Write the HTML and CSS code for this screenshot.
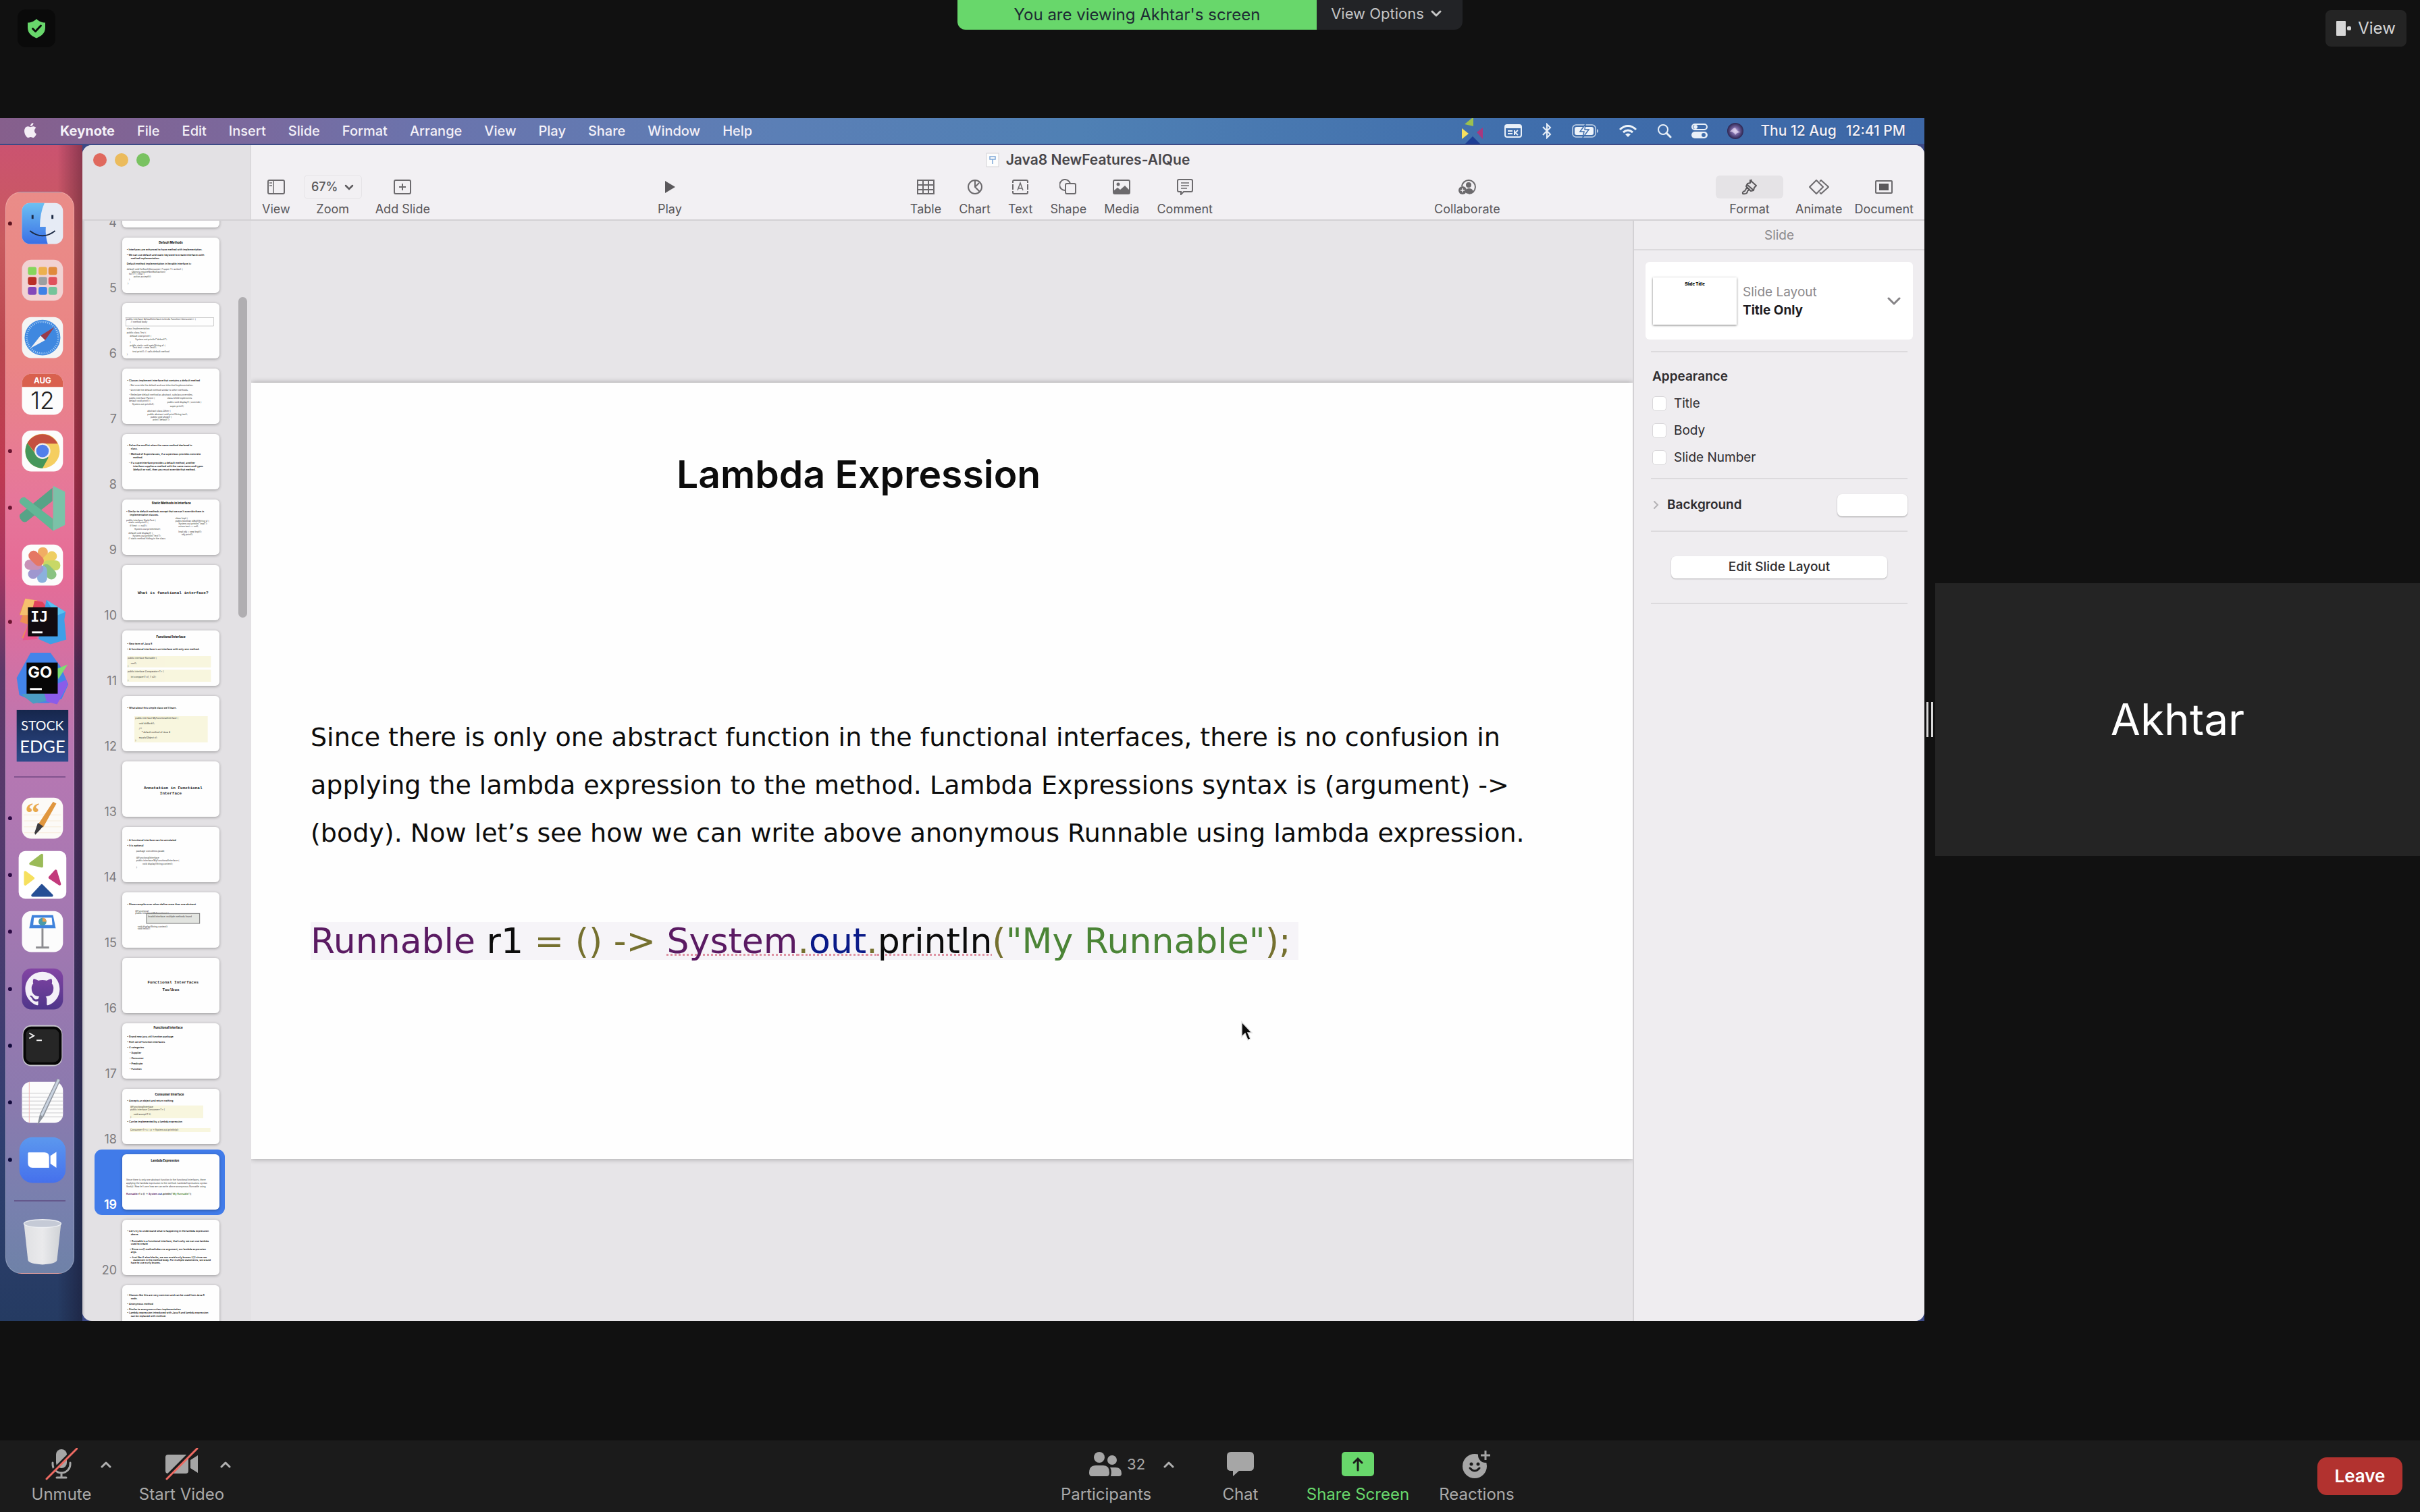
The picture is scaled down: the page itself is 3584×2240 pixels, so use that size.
FILE: index.html
```html
<!DOCTYPE html>
<html lang="en">
<head>
<meta charset="utf-8">
<title>Zoom Meeting</title>
<link rel="stylesheet" href="styles.css">
</head>
<body>
<main class="stage">
  <header class="top">
    <button class="shield" aria-label="Meeting information">
      <svg width="28" height="30" viewBox="0 0 28 30"><path d="M14 1c4 4 8 5.500 13 5.500V14c0 8-6 12.500-13 15.500C7 26.500 1 22 1 14V6.500C6 6.500 10 5 14 1z" fill="#68d76b"/><path d="M8.500 15.500l4 4 8-8.500" fill="none" stroke="#0a0a0a" stroke-width="3" stroke-linecap="round" stroke-linejoin="round"/></svg>
    </button>
    <div class="banner">
      <span class="banner-msg">You are viewing Akhtar's screen</span>
      <button class="banner-opt">View Options
        <svg width="16" height="10" viewBox="0 0 16 10"><path d="M2 2l6 6 6-6" fill="none" stroke="#c4c4c4" stroke-width="3" stroke-linecap="round" stroke-linejoin="round"/></svg>
      </button>
    </div>
    <button class="view-btn">
      <svg width="22" height="22" viewBox="0 0 22 22" fill="#d6d6d6"><rect width="14" height="22" rx="1"/><rect x="16" y="8" width="6" height="6" rx="2"/></svg>
      View
    </button>
  </header>

  <section class="share">
    <nav class="menubar">
      <svg class="apple" width="22" height="24" viewBox="0 0 24 24"><path fill="#f4eef6" d="M12.152 6.896c-.948 0-2.415-1.078-3.960-1.040-2.040.027-3.910 1.183-4.961 3.014-2.117 3.675-.546 9.103 1.519 12.090 1.013 1.454 2.208 3.090 3.792 3.039 1.520-.065 2.090-.987 3.935-.987 1.831 0 2.350.987 3.960.948 1.637-.026 2.676-1.480 3.676-2.948 1.156-1.688 1.636-3.325 1.662-3.415-.039-.013-3.182-1.221-3.220-4.857-.026-3.040 2.480-4.494 2.597-4.559-1.429-2.090-3.623-2.324-4.390-2.376-2-.156-3.675 1.090-4.610 1.090zM15.530 3.830c.843-1.012 1.400-2.427 1.245-3.830-1.207.052-2.662.805-3.532 1.818-.780.896-1.454 2.338-1.273 3.714 1.338.104 2.715-.688 3.559-1.701"/></svg>
      <button class="menu app">Keynote</button>
      <button class="menu">File</button>
      <button class="menu">Edit</button>
      <button class="menu">Insert</button>
      <button class="menu">Slide</button>
      <button class="menu">Format</button>
      <button class="menu">Arrange</button>
      <button class="menu">View</button>
      <button class="menu">Play</button>
      <button class="menu">Share</button>
      <button class="menu">Window</button>
      <button class="menu">Help</button>
      <div class="status">
        <svg width="36" height="38" viewBox="0 0 36 38"><path d="M17 0h2v12L6 9z" fill="#9cc04f"/><path d="M2 15l10 8-10 8z" fill="#f6e05e"/><path d="M33 14v17l-9-10z" fill="#a8387e"/><path d="M18 27l11 11H7z" fill="#1e3f95"/></svg>
        <svg width="26" height="20" viewBox="0 0 26 20"><rect x="1" y="1" width="24" height="18" rx="3" fill="none" stroke="#e9f0f8" stroke-width="2"/><path d="M1 2h24v4H1z" fill="#e9f0f8"/><path d="M5 10h7M5 14h7M15 9v7M20 9l-4 3.500 4 3.500" stroke="#e9f0f8" stroke-width="2" fill="none"/></svg>
        <svg width="16" height="24" viewBox="0 0 16 24"><path d="M2 6l11 11-5 5V2l5 5L2 18" fill="none" stroke="#e9f0f8" stroke-width="2"/></svg>
        <svg width="40" height="20" viewBox="0 0 40 20"><rect x="1" y="1" width="34" height="18" rx="5" fill="none" stroke="#c9d8ea" stroke-width="1.500"/><rect x="4" y="4" width="28" height="12" rx="3" fill="#eef4fa"/><path d="M20 0l-8 11h6l-2 9 9-12h-6z" fill="#eef4fa" stroke="#3f6dab" stroke-width="1.500"/><path d="M37 7v6q2-1 2-3t-2-3z" fill="#c9d8ea"/></svg>
        <svg width="28" height="20" viewBox="0 0 28 20" fill="none" stroke="#eef4fa" stroke-width="3"><path d="M2 8q12-11 24 0M7 12q7-6 14 0"/><path d="M14 19l-4-4q4-3 8 0z" fill="#eef4fa" stroke="none"/></svg>
        <svg width="22" height="22" viewBox="0 0 22 22"><circle cx="9" cy="9" r="7" fill="none" stroke="#e9f0f8" stroke-width="2"/><path d="M14 14l6 6" stroke="#e9f0f8" stroke-width="3" stroke-linecap="round"/></svg>
        <svg width="24" height="22" viewBox="0 0 24 22"><rect x="1" y="1" width="22" height="8" rx="4" fill="none" stroke="#e9f0f8" stroke-width="2"/><circle cx="6" cy="5" r="3" fill="#e9f0f8"/><rect y="12" width="24" height="10" rx="5" fill="#e9f0f8"/><circle cx="18" cy="17" r="3" fill="#3f6dab"/></svg>
        <svg width="24" height="24" viewBox="0 0 24 24"><defs><radialGradient id="siri"><stop offset="0" stop-color="#d9d4f0"/><stop offset=".4" stop-color="#7d6ba8"/><stop offset="1" stop-color="#2b2450"/></radialGradient></defs><circle cx="12" cy="12" r="12" fill="url(#siri)"/><path d="M4 13q5-6 8-6 1 5 8 7-6 0-8 4-2-5-8-5z" fill="#e6d9f4" opacity=".7"/></svg>
      </div>
      <span class="clock"><span>Thu 12 Aug</span><span>12:41 PM</span></span>
    </nav>

    <div class="desktop">
      <aside class="dock-col">
        <div class="dock">
          <svg viewBox="0 0 102 84"><defs><linearGradient id="fb" x2="0" y2="1"><stop offset="0" stop-color="#6cc0f2"/><stop offset="1" stop-color="#3a6fe6"/></linearGradient></defs><circle cx="6" cy="42" r="3" fill="#5e1420"/><g transform="translate(15 2)"><rect x="9" y="9" width="62" height="62" rx="12" fill="#e6ebf5"/><path d="M21 9h22q-7 16-7 36h9q-1 14 3 26H21a12 12 0 0 1-12-12V21A12 12 0 0 1 21 9z" fill="url(#fb)"/><path d="M25 27v6M55 27v6" stroke="#1c2a44" stroke-width="3"/><path d="M21 51q19 15 38 0" fill="none" stroke="#1c2a44" stroke-width="2"/></g></svg>
          <svg viewBox="0 0 102 84"><g transform="translate(15 2)"><rect x="9" y="9" width="62" height="62" rx="14" fill="#f1d2d2"/><rect x="18" y="20" width="13" height="12" rx="3" fill="#86d65c"/><rect x="34" y="20" width="13" height="12" rx="3" fill="#edb04e"/><rect x="49" y="20" width="13" height="12" rx="3" fill="#e08a3c"/><rect x="18" y="35" width="13" height="12" rx="3" fill="#b92f26"/><rect x="34" y="35" width="13" height="12" rx="3" fill="#9c9fa1"/><rect x="49" y="35" width="13" height="12" rx="3" fill="#e0525c"/><rect x="18" y="50" width="13" height="12" rx="3" fill="#8348ba"/><rect x="34" y="50" width="13" height="12" rx="3" fill="#3f82e6"/><rect x="49" y="50" width="13" height="12" rx="3" fill="#74c49a"/></g></svg>
          <svg viewBox="0 0 102 84"><g transform="translate(15 2)"><rect x="9" y="9" width="62" height="62" rx="14" fill="#f4f4f4"/><circle cx="40" cy="40" r="27" fill="#3f88e0"/><circle cx="40" cy="40" r="24" fill="none" stroke="#b8d8f6" stroke-width="3" stroke-dasharray="1 2"/><path d="M58 24L44 44l-7-7z" fill="#9a3a48"/><path d="M22 56l15-19 7 7z" fill="#f0f0f2"/></g></svg>
          <svg viewBox="0 0 102 84"><g transform="translate(15 2)"><rect x="9" y="9" width="62" height="62" rx="14" fill="#fcfcfc"/><path d="M9 29v-6A14 14 0 0 1 23 9h34a14 14 0 0 1 14 14v6z" fill="#d9604e"/><text x="40" y="24" class="cal-m">AUG</text><text x="40" y="62" class="cal-d">12</text></g></svg>
          <svg viewBox="0 0 102 84"><circle cx="6" cy="42" r="3" fill="#6a1430"/><g transform="translate(15 2)"><rect x="9" y="9" width="62" height="62" rx="14" fill="#fcfcfc"/><circle cx="40" cy="40" r="26" fill="#f5ce60"/><path d="M17 28A26 26 0 0 1 63 29H40l-9 16z" fill="#c4503f"/><path d="M17 28A26 26 0 0 0 40 66l9-16-9-10-10 5z" fill="#46965a"/><circle cx="40" cy="40" r="12" fill="#f2efe9"/><circle cx="40" cy="40" r="9.500" fill="#527fea"/></g></svg>
          <svg viewBox="0 0 102 84"><circle cx="6" cy="42" r="3" fill="#6a1430"/><g transform="translate(15 2)"><path d="M6 50l49-40v20L16 61q-5 2-8-2-4-4-2-9z" fill="#57a387"/><path d="M6 28q2-4 7-4l43 33v18L7 34q-3-3-1-6z" fill="#62b796"/><path d="M56 7l18 9v50l-18 9z" fill="#7ac2a8"/></g></svg>
          <svg viewBox="0 0 102 84"><g transform="translate(15 2)"><rect x="9" y="9" width="62" height="62" rx="14" fill="#fcfcfc"/><g opacity=".85"><rect x="33" y="13" width="15" height="26" rx="7" fill="#f0a04a"/><rect x="33" y="13" width="15" height="26" rx="7" fill="#ecc646" transform="rotate(45 40 40)"/><rect x="33" y="13" width="15" height="26" rx="7" fill="#c0d24c" transform="rotate(90 40 40)"/><rect x="33" y="13" width="15" height="26" rx="7" fill="#76b86c" transform="rotate(135 40 40)"/><rect x="33" y="13" width="15" height="26" rx="7" fill="#78a4d8" transform="rotate(180 40 40)"/><rect x="33" y="13" width="15" height="26" rx="7" fill="#8f86c8" transform="rotate(225 40 40)"/><rect x="33" y="13" width="15" height="26" rx="7" fill="#c080ac" transform="rotate(270 40 40)"/><rect x="33" y="13" width="15" height="26" rx="7" fill="#e2604a" transform="rotate(315 40 40)"/></g></g></svg>
          <svg viewBox="0 0 102 84"><circle cx="6" cy="42" r="3" fill="#6a1430"/><g transform="translate(15 2)"><path d="M14 5l18 3 10 14-24 46-9-4 9-20-12-4 4-10-5-1z" fill="#ee8f52"/><path d="M14 5l18 3-14 22-12 0z" fill="#f5c06e"/><path d="M28 8l12 2 8 10-24 4z" fill="#e0425c"/><path d="M46 7l29 18-2 12 3 30-24 7-18-8z" fill="#3f9fe6"/><path d="M46 7l29 18-14 6z" fill="#5ac2f0"/><path d="M10 68l9-26 14 24z" fill="#e8568c"/><rect x="18" y="18" width="45" height="44" fill="#120c10"/><text x="22" y="40" class="jb ij">IJ</text><path d="M24 56h16" stroke="#fff" stroke-width="3"/></g></svg>
          <svg viewBox="0 0 102 84"><g transform="translate(15 2)"><path d="M22 1h30l16 22 11 26-10 22-20 6-16 0-28-12-4-26z" fill="#4384ea"/><path d="M44 56l32-14 2 8-16 29-22-6z" fill="#8a5cea"/><path d="M8 64l34-4 4 14-20 4z" fill="#4c9cc2"/><path d="M60 26l18-7-14 22z" fill="#7ee070"/><rect x="16" y="16" width="47" height="47" fill="#060606"/><text x="18" y="39" class="jb">GO</text><path d="M21 56h18" stroke="#fff" stroke-width="3"/></g></svg>
          <svg viewBox="0 0 102 84"><defs><linearGradient id="se" x2="0" y2="1"><stop offset="0" stop-color="#16264c"/><stop offset="1" stop-color="#2d4a8a"/></linearGradient></defs><g transform="translate(15 2)"><rect x="1" y="1" width="78" height="78" fill="url(#se)"/><text x="40" y="32" class="se1">STOCK</text><text x="40" y="65" class="se2">EDGE</text></g></svg>
          <hr>
          <svg viewBox="0 0 102 84"><circle cx="6" cy="42" r="3" fill="#2c0a44"/><g transform="translate(15 2)"><rect x="9" y="9" width="62" height="62" rx="14" fill="#fcfaf7"/><path d="M12 35h56M12 44h56M12 53h56M12 62h56" stroke="#f6ead8"/><text x="14" y="46" class="quote">“</text><path d="M56 15l5 3-20 36-8-4z" fill="#e0963e"/><path d="M33 47l8 5-6 7-6 6-1-3z" fill="#3c3c40"/></g></svg>
          <svg viewBox="0 0 102 84"><circle cx="6" cy="42" r="3" fill="#2c0a44"/><g transform="translate(15 2)"><rect x="4" y="4" width="72" height="72" rx="10" fill="#fff"/><g stroke-linejoin="round" stroke-width="4"><path d="M39 10v17l-17-4z" fill="#9bbb58" stroke="#9bbb58"/><path d="M14 36l12 9-12 9z" fill="#f6e05e" stroke="#f6e05e"/><path d="M60 34l6 20-15-10z" fill="#c33a7c" stroke="#c33a7c"/><path d="M39 56l15 15H25z" fill="#264f95" stroke="#264f95"/></g></g></svg>
          <svg viewBox="0 0 102 84"><circle cx="6" cy="42" r="3" fill="#2c0a44"/><g transform="translate(15 2)"><rect x="9" y="9" width="62" height="62" rx="14" fill="#fcfcfc"/><path d="M24 15h32l4 20H20z" fill="#3e82dc"/><path d="M27 19h27l1 11H26z" fill="#fff"/><circle cx="40" cy="25" r="6" fill="#4a9aa8"/><path d="M40 25v-6a6 6 0 0 1 6 6z" fill="#e8a050"/><path d="M40 35v28M30 64h20" stroke="#8c8c90" stroke-width="3"/></g></svg>
          <svg viewBox="0 0 102 84"><defs><linearGradient id="gh" x2="0" y2="1"><stop offset="0" stop-color="#8344a4"/><stop offset="1" stop-color="#4f368a"/></linearGradient></defs><circle cx="6" cy="42" r="3" fill="#200a44"/><g transform="translate(15 2)"><rect x="9" y="9" width="62" height="62" rx="14" fill="url(#gh)"/><path transform="translate(14 14) scale(3.250)" fill="#f4f0f8" d="M8 0C3.580 0 0 3.580 0 8c0 3.540 2.290 6.530 5.470 7.590.400.070.550-.170.550-.380 0-.190-.010-.820-.010-1.490-2.010.370-2.530-.490-2.690-.940-.090-.230-.480-.940-.820-1.130-.280-.150-.680-.520-.010-.530.630-.010 1.080.580 1.230.820.720 1.210 1.870.870 2.330.660.070-.520.280-.870.510-1.070-1.780-.200-3.640-.890-3.640-3.950 0-.870.310-1.590.820-2.150-.080-.200-.360-1.020.080-2.120 0 0 .670-.210 2.200.820.640-.180 1.320-.270 2-.270.680 0 1.360.090 2 .270 1.530-1.040 2.200-.820 2.200-.820.440 1.100.160 1.920.080 2.120.510.560.820 1.270.820 2.150 0 3.070-1.870 3.750-3.650 3.950.290.250.540.730.540 1.480 0 1.070-.010 1.930-.010 2.200 0 .210.150.460.550.380A8.013 8.013 0 0016 8c0-4.420-3.580-8-8-8z"/></g></svg>
          <svg viewBox="0 0 102 84"><circle cx="6" cy="42" r="3" fill="#120a3c"/><g transform="translate(15 2)"><rect x="10" y="9" width="60" height="62" rx="13" fill="#c6c4cc"/><rect x="11" y="11" width="58" height="58" rx="12" fill="#060606"/><rect x="15" y="15" width="50" height="50" rx="8" fill="#262626"/><path d="M20 21l7 4-7 4M31 32h8" fill="none" stroke="#eee" stroke-width="2"/></g></svg>
          <svg viewBox="0 0 102 84"><circle cx="6" cy="42" r="3" fill="#120a3c"/><g transform="translate(15 2)"><rect x="9" y="9" width="62" height="62" rx="13" fill="#fcfcfc"/><path d="M9 26h62M9 32h62M9 38h62M9 44h62M9 50h62M9 56h62M9 62h62" stroke="#c9c9cc"/><path d="M20 9v62" stroke="#f0b8b8"/><path d="M62 4l5 3-25 54-10 14 4-17z" fill="#8f959e"/><path d="M63 5l3 1-26 55-3-2z" fill="#c9d3e0"/></g></svg>
          <svg viewBox="0 0 102 84"><defs><linearGradient id="zm" x2="0" y2="1"><stop offset="0" stop-color="#5c98ee"/><stop offset="1" stop-color="#4570ec"/></linearGradient></defs><circle cx="6" cy="42" r="3" fill="#0a0a3c"/><g transform="translate(15 2)"><rect x="5" y="6" width="70" height="69" rx="20" fill="url(#zm)"/><path d="M19 29h24q7 0 7 7v16H25q-7 0-7-7V30z" fill="#fff"/><path d="M61 28v24l-9-6V34z" fill="#fff"/></g></svg>
          <hr>
          <svg viewBox="0 0 102 84"><defs><linearGradient id="tr"><stop offset="0" stop-color="#dfe0e3"/><stop offset=".5" stop-color="#eaeaec"/><stop offset="1" stop-color="#cfd2d6"/></linearGradient></defs><g transform="translate(15 2)"><path d="M12 12l6 55q1 6 22 7 21-1 22-7l6-55z" fill="url(#tr)"/><ellipse cx="40" cy="12" rx="28" ry="6" fill="#c5cad6" stroke="#eceef2" stroke-width="1.500"/></g></svg>
        </div>
      </aside>

      <section class="window">
        <header class="win-head">
          <div class="lights"><i class="red"></i><i class="yellow"></i><i class="green"></i></div>
          <div class="bar">
            <h1 class="doc-title">
              <svg width="20" height="22" viewBox="0 0 20 22"><rect x="1" y="1" width="18" height="20" fill="#fdfdfd" stroke="#d4d2d6"/><path d="M6 6h8v4H6zM10 10v7" fill="none" stroke="#7fa8d8" stroke-width="1.500"/></svg>
              Java8 NewFeatures-AIQue</h1>
            <div class="tools">
              <div class="group left">
                <button class="tool"><svg width="26" height="22" viewBox="0 0 26 22"><rect x="1" y="1" width="24" height="20" rx="2" fill="none" stroke="#6c6a6d" stroke-width="2"/><path d="M9 1v20M3 5h4M3 9h4" stroke="#6c6a6d" stroke-width="1.500"/></svg>View</button>
                <button class="tool"><span class="pct">67% <svg width="14" height="9" viewBox="0 0 14 9"><path d="M2 2l5 5 5-5" fill="none" stroke="#5c5a5d" stroke-width="2.500" stroke-linecap="round"/></svg></span>Zoom</button>
                <button class="tool"><svg width="26" height="22" viewBox="0 0 26 22"><rect x="1" y="1" width="24" height="20" rx="2" fill="none" stroke="#6c6a6d" stroke-width="2"/><path d="M13 6v10M8 11h10" stroke="#6c6a6d" stroke-width="2"/></svg>Add Slide</button>
              </div>
              <div class="group play">
                <button class="tool"><svg width="18" height="20" viewBox="0 0 18 20"><path d="M2 1l15 9-15 9z" fill="#5a585b"/></svg>Play</button>
              </div>
              <div class="group media">
                <button class="tool"><svg width="26" height="22" viewBox="0 0 26 22"><path d="M1 1h24v20H1zM1 8h24M1 15h24M9 1v20M17 1v20" fill="none" stroke="#6c6a6d" stroke-width="2"/></svg>Table</button>
                <button class="tool"><svg width="22" height="22" viewBox="0 0 22 22"><circle cx="11" cy="11" r="10" fill="none" stroke="#6c6a6d" stroke-width="2"/><path d="M11 1v10l7 7M11 11l6-6" fill="none" stroke="#6c6a6d" stroke-width="2"/></svg>Chart</button>
                <button class="tool"><svg width="26" height="22" viewBox="0 0 26 22"><rect x="2" y="1" width="22" height="20" rx="2" fill="none" stroke="#6c6a6d" stroke-width="2"/><path d="M9 16l4-11 4 11M10 13h6" fill="none" stroke="#6c6a6d" stroke-width="1.500"/><path d="M0 5h4v2H0zM22 5h4v2h-4zM0 15h4v2H0zM22 15h4v2h-4z" fill="#f2f0f3"/></svg>Text</button>
                <button class="tool"><svg width="26" height="24" viewBox="0 0 26 24" fill="none" stroke="#6c6a6d" stroke-width="2"><path d="M8 17A8 8 0 1 1 16 7"/><rect x="9" y="7" width="15" height="15" rx="2"/></svg>Shape</button>
                <button class="tool"><svg width="26" height="22" viewBox="0 0 26 22"><rect x="1" y="1" width="24" height="20" rx="2" fill="none" stroke="#6c6a6d" stroke-width="2"/><circle cx="8" cy="7" r="2.500" fill="#6c6a6d"/><path d="M2 20v-4l5-4 4 3 7-6 6 6v5z" fill="#6c6a6d"/></svg>Media</button>
                <button class="tool"><svg width="24" height="24" viewBox="0 0 24 24" fill="none" stroke="#6c6a6d" stroke-width="2"><path d="M3 1h18q2 0 2 2v14q0 2-2 2H10l-4 4v-4H3q-2 0-2-2V3q0-2 2-2z"/><path d="M6 6h12M6 10h12M6 14h9" stroke-width="1.500"/></svg>Comment</button>
              </div>
              <div class="group collab">
                <button class="tool"><svg width="26" height="24" viewBox="0 0 26 24"><path d="M5 11a10 10 0 1 1 10 11" fill="none" stroke="#6c6a6d" stroke-width="2"/><circle cx="15" cy="9" r="4" fill="#6c6a6d"/><path d="M11 21q-2-6 4-7 6 0 7 5-3 3-8 3z" fill="#6c6a6d"/><circle cx="6" cy="17" r="6" fill="#6c6a6d"/><path d="M6 14v6M3 17h6" stroke="#f2f0f3" stroke-width="1.500"/></svg>Collaborate</button>
              </div>
              <div class="group right">
                <button class="tool fmt"><span class="hl"><svg width="24" height="24" viewBox="0 0 24 24" fill="none" stroke="#5a585b" stroke-width="2" stroke-linejoin="round"><path d="M13 2l9 8-3 3-1 4-4 1-7-7 2-4 4-1zM15 1l-1 4M9 9l8 7"/><path d="M8 13l4 3-3 2q0 5-7 4-1-3 3-4z"/></svg></span>Format</button>
                <button class="tool"><svg width="30" height="24" viewBox="0 0 30 24" fill="none" stroke="#6c6a6d" stroke-width="2" stroke-linejoin="round"><path d="M11 2l10 10-10 10L1 12z"/><path d="M16 4l2-2 11 10-11 10-2-2"/></svg>Animate</button>
                <button class="tool"><svg width="26" height="20" viewBox="0 0 26 20"><rect x="1" y="1" width="24" height="18" rx="1" fill="none" stroke="#6c6a6d" stroke-width="2"/><rect x="6" y="5" width="14" height="10" fill="#5a585b"/></svg>Document</button>
              </div>
            </div>
          </div>
        </header>

        <div class="win-body">
          <nav class="nav">
            <ol class="slides" start="4">
              <li><span>4</span><svg viewBox="0 0 432 246"></svg></li>
              <li><span>5</span><svg viewBox="0 0 432 246"><text x="216" y="28" class="h">Default Methods</text><g class="b"><text x="20" y="58">•  Interfaces are enhanced to have method with implementation.</text><text x="20" y="81">•  We can use default and static keyword to create interfaces with</text><text x="38" y="97">method implementation.</text><text x="20" y="121">Default method implementation in Iterable interface is:</text></g><g class="c"><text x="20" y="144">default void forEach(Consumer&lt;? super T&gt; action) {</text><text x="42" y="156">Objects.requireNonNull(action);</text><text x="30" y="166">for (T t : this) {</text><text x="50" y="178">action.accept(t);</text><text x="30" y="190">}</text><text x="24" y="206">}</text></g></svg></li>
              <li><span>6</span><svg viewBox="0 0 432 246"><rect x="16" y="64" width="390" height="38" fill="none" stroke="#777"/><g class="c"><text x="18" y="76">public interface DefaultInterface extends Function&lt;Consumer&gt; {</text><text x="38" y="88">// method body</text><text x="20" y="116">class Implementation</text><text x="20" y="134">public class Test {</text><text x="34" y="150">default void print() {</text><text x="58" y="166">System.out.println("default");</text><text x="34" y="178">}</text><text x="34" y="192">public static void main(String a) {</text><text x="46" y="202">Test test = new Test();</text><text x="46" y="218">test.print(); // calls default method</text><text x="20" y="232">}</text></g></svg></li>
              <li><span>7</span><svg viewBox="0 0 432 246"><g class="b"><text x="22" y="56">•  Classes implement interface that contains a default method</text></g><g class="c"><text x="30" y="78">–  Not override the default and use inherited implementation.</text><text x="30" y="98">–  Override the default method similar to other methods.</text><text x="30" y="119">–  Redeclare default method as abstract, subclass overrides.</text><text x="30" y="136">public interface Parent {</text><text x="30" y="148">default void print() {</text><text x="44" y="162">System.out.println();</text><text x="200" y="136">class Child implements</text><text x="200" y="152">public void display() { override }</text><text x="212" y="170">super.print();</text><text x="112" y="192">abstract class Other {</text><text x="112" y="206">public abstract void print(String text);</text><text x="126" y="220">public void show() {</text><text x="136" y="230">print("default");</text></g></svg></li>
              <li><span>8</span><svg viewBox="0 0 432 246"><g class="b"><text x="22" y="54">•  Solve the conflict when the same method declared in</text><text x="38" y="69">class.</text><text x="30" y="93">–  Method of Superclasses, if a superclass provides concrete</text><text x="48" y="107">method.</text><text x="30" y="131">–  If a superinterface provides a default method, another</text><text x="48" y="146">interface supplies a method with the same name and types</text><text x="48" y="161">(default or not), then you must override that method.</text></g></svg></li>
              <li><span>9</span><svg viewBox="0 0 432 246"><text x="218" y="20" class="h">Static Methods in Interface</text><g class="b"><text x="18" y="57">•  Similar to default methods except that we can’t override them in</text><text x="34" y="73">implementation classes.</text></g><g class="c"><text x="18" y="95">public interface StaticTest {</text><text x="28" y="106">static void print() {</text><text x="34" y="120">if (text == null) {</text><text x="54" y="134">System.out.println(text);</text><text x="28" y="154">default void display() {</text><text x="46" y="164">System.out.println("text");</text><text x="28" y="178">// static method hiding in the class</text><text x="236" y="86">class Impl {</text><text x="236" y="98">public boolean isNull(String s) {</text><text x="250" y="112">System.out.println("impl");</text><text x="250" y="122">return text == null;</text><text x="250" y="146">Impl obj = new Impl();</text><text x="264" y="160">obj.print();</text></g></svg></li>
              <li><span>10</span><svg viewBox="0 0 432 246"><g class="m"><text x="226" y="130">What is functional interface?</text></g></svg></li>
              <li><span>11</span><svg viewBox="0 0 432 246"><text x="216" y="33" class="h">Functional Interface</text><g class="b"><text x="22" y="62">•  New term of Java 8</text><text x="22" y="86">•  A functional interface is an interface with only one method.</text></g><path d="M22 114h372v50H22zM22 174h372v54H22z" fill="#f8f6de"/><g class="c"><text x="24" y="126">public interface Runnable {</text><text x="38" y="150">run();</text><text x="24" y="162">}</text><text x="24" y="186">public interface Comparator&lt;T&gt; {</text><text x="38" y="210">int compare(T o1, T o2);</text><text x="24" y="224">}</text></g></svg></li>
              <li><span>12</span><svg viewBox="0 0 432 246"><g class="b"><text x="22" y="56">•  What about this simple class we’ll learn.</text></g><path d="M54 90h326v116H54z" fill="#f8f6de"/><g class="c"><text x="58" y="102">public interface MyFunctionalInterface {</text><text x="74" y="126">void doWork();</text><text x="74" y="150">/**</text><text x="86" y="164">* default method of Java 8</text><text x="74" y="188">equals(Object o);</text><text x="58" y="200">}</text></g></svg></li>
              <li><span>13</span><svg viewBox="0 0 432 246"><g class="m"><text x="226" y="123">Annotation in Functional</text><text x="216" y="147">Interface</text></g></svg></li>
              <li><span>14</span><svg viewBox="0 0 432 246"><g class="b"><text x="22" y="62">•  A functional interface can be annotated</text><text x="22" y="87">•  It is optional</text></g><g class="c"><text x="62" y="112">package com.demo.java8;</text><text x="62" y="140">@FunctionalInterface</text><text x="62" y="154">public interface MyFunctionalInterface {</text><text x="90" y="168">void display(String content);</text><text x="62" y="182">}</text></g></svg></li>
              <li><span>15</span><svg viewBox="0 0 432 246"><g class="b"><text x="22" y="56">•  Show compile error when define more than one abstract</text></g><g class="c"><text x="58" y="86">@Functional</text><text x="58" y="96">public interface MyFunctional {</text><text x="68" y="156">void display(String content);</text><text x="68" y="164">void hello();</text></g><rect x="108" y="94" width="236" height="44" fill="#e2e4e0" stroke="#777" stroke-width="3"/><text x="114" y="112" class="c">Invalid interface: multiple methods found</text></svg></li>
              <li><span>16</span><svg viewBox="0 0 432 246"><g class="m"><text x="226" y="115">Functional Interfaces</text><text x="216" y="146">Toolbox</text></g></svg></li>
              <li><span>17</span><svg viewBox="0 0 432 246"><text x="204" y="23" class="h">Functional Interface</text><g class="b"><text x="22" y="62">•  Brand new java.util.function package</text><text x="22" y="86">•  Rich set of function interfaces</text><text x="22" y="110">•  4 categories</text><text x="32" y="134">–  Supplier</text><text x="32" y="158">–  Consumer</text><text x="32" y="182">–  Predicate</text><text x="32" y="206">–  Function</text></g></svg></li>
              <li><span>18</span><svg viewBox="0 0 432 246"><text x="210" y="31" class="h">Consumer Interface</text><path d="M34 74h326v56H34zM34 174h358v18H34z" fill="#f8f6de"/><g class="b"><text x="22" y="57">•  Accepts an object and return nothing</text><text x="22" y="150">•  Can be implemented by a lambda expression</text></g><g class="c"><text x="36" y="84">@FunctionalInterface</text><text x="36" y="96">public interface Consumer&lt;T&gt; {</text><text x="50" y="116">void accept(T t);</text><text x="36" y="128">}</text><text x="36" y="186">Consumer&lt;T&gt; c = p -&gt; System.out.println(p);</text></g></svg></li>
              <li class="on"><span>19</span><svg viewBox="0 0 432 246"><text x="190" y="34" class="h">Lambda Expression</text><g class="c"><text x="18" y="116">Since there is only one abstract function in the functional interfaces, there</text><text x="18" y="131">applying the lambda expression to the method. Lambda Expressions syntax</text><text x="18" y="147">(body). Now let’s see how we can write above anonymous Runnable using</text></g><g class="b"><text x="18" y="180"><tspan class="pu">Runnable</tspan> r1 = () -&gt; <tspan class="pu">System</tspan>.<tspan class="bl">out</tspan>.println(<tspan class="gr">"My Runnable"</tspan>);</text></g></svg></li>
              <li><span>20</span><svg viewBox="0 0 432 246"><g class="b"><text x="22" y="54">•  Let’s try to understand what is happening in the lambda expression</text><text x="38" y="68">above.</text><text x="34" y="98">•  Runnable is a functional interface, that’s why we can use lambda</text><text x="38" y="110">used to create</text><text x="34" y="134">•  Since run() method takes no argument, our lambda expression</text><text x="38" y="148">args.</text><text x="34" y="172">•  Just like if-else blocks, we can avoid curly braces ({}) since we</text><text x="48" y="184">statement in the method body. For multiple statements, we would</text><text x="38" y="196">have to use curly braces.</text></g></svg></li>
              <li><svg viewBox="0 0 432 246"><g class="b"><text x="22" y="48">•  Classes like this are very common and can be used from Java 8</text><text x="38" y="62">code.</text><text x="22" y="88">•  Anonymous method</text><text x="22" y="110">•  Similar to anonymous class implementation</text><text x="22" y="126">•  Lambda expression introduced with Java 8 and lambda expression</text><text x="38" y="140">can be replaced with method.</text></g></svg></li>
            </ol>
            <div class="scroll"></div>
          </nav>

          <div class="canvas">
            <article class="slide">
              <h2>Lambda Expression</h2>
              <p class="text">Since there is only one abstract function in the functional interfaces, there is no confusion in<br>applying the lambda expression to the method. Lambda Expressions syntax is (argument) -&gt;<br>(body). Now let’s see how we can write above anonymous Runnable using lambda expression.</p>
              <p class="code"><b class="pu">Runnable</b> r1 <b class="ol">=</b> <b class="ol">()</b> <b class="ol">-&gt;</b> <span class="sq"><b class="pu">System</b><b class="ol">.</b><b class="bl">out</b><b class="ol">.</b>println</span><b class="ol">(</b><b class="gr">"My Runnable"</b><b class="ol">);</b></p>
              <svg class="cursor" width="20" height="32" viewBox="0 0 20 32"><path d="M3 2v22l5-5 4 10 4-2-4-9h6z" fill="#0a0a0a" stroke="#e4e4e4" stroke-width="1.500"/></svg>
            </article>
          </div>

          <aside class="inspector">
            <h3 class="ins-title">Slide</h3>
            <div class="ins-body">
              <button class="layout">
                <svg class="lay-thumb" width="124" height="70" viewBox="0 0 124 70"><rect width="124" height="70" fill="#fff"/><text x="62" y="12">Slide Title</text></svg>
                <span class="lay-name"><span>Slide Layout</span><b>Title Only</b></span>
                <svg width="20" height="12" viewBox="0 0 20 12"><path d="M2 2l8 8 8-8" fill="none" stroke="#858386" stroke-width="3" stroke-linecap="round" stroke-linejoin="round"/></svg>
              </button>
              <fieldset class="sec appear">
                <legend>Appearance</legend>
                <label><input type="checkbox">Title</label>
                <label><input type="checkbox">Body</label>
                <label><input type="checkbox">Slide Number</label>
              </fieldset>
              <div class="sec bg">
                <button class="disc"><svg width="8" height="14" viewBox="0 0 8 14"><path d="M1 2l5 5-5 5" fill="none" stroke="#b4b2b5" stroke-width="2" stroke-linecap="round"/></svg>Background</button>
                <button class="well" aria-label="Background colour"></button>
              </div>
              <div class="sec edit"><button>Edit Slide Layout</button></div>
            </div>
          </aside>
        </div>
      </section>
    </div>
  </section>

  <div class="handle"></div>
  <section class="tile">Akhtar</section>
</main>

<footer class="controls">
  <div class="cg cg-left">
    <button class="ctl unmute"><svg width="48" height="48" viewBox="0 0 48 48"><path d="M16 10a8 8 0 0 1 16 0v12a8 8 0 0 1-16 0z" fill="#a6a6a6"/><path d="M11 22v2a13 13 0 0 0 26 0v-2M24 37v7M17 44h14" fill="none" stroke="#a6a6a6" stroke-width="3" stroke-linecap="round"/><path d="M2 43L45 0" stroke="#1b1b1b" stroke-width="4"/><path d="M2 46L47 1" stroke="#ec6a62" stroke-width="3" stroke-linecap="round"/></svg>Unmute</button>
    <button class="chev" aria-label="Audio options"><svg width="16" height="10" viewBox="0 0 16 10"><path d="M2 8l6-6 6 6" fill="none" stroke="#b0b0b0" stroke-width="3" stroke-linecap="round" stroke-linejoin="round"/></svg></button>
    <button class="ctl video"><svg width="50" height="48" viewBox="0 0 50 48"><rect x="1" y="10" width="34" height="28" rx="4" fill="#a6a6a6"/><path d="M38 18l11-7v26l-11-7z" fill="#a6a6a6"/><path d="M2 43L45 0" stroke="#1b1b1b" stroke-width="4"/><path d="M3 46L48 1" stroke="#ec6a62" stroke-width="3" stroke-linecap="round"/></svg>Start Video</button>
    <button class="chev" aria-label="Video options"><svg width="16" height="10" viewBox="0 0 16 10"><path d="M2 8l6-6 6 6" fill="none" stroke="#b0b0b0" stroke-width="3" stroke-linecap="round" stroke-linejoin="round"/></svg></button>
  </div>
  <div class="cg cg-mid">
    <button class="ctl people"><span class="cnt"><svg width="48" height="36" viewBox="0 0 48 36" fill="#a6a6a6"><circle cx="15" cy="8" r="8"/><path d="M0 31q0-11 10-11h11q9 0 9 11 0 5-4 5H4q-4 0-4-5z"/><circle cx="34" cy="12" r="7"/><path d="M31 23h8q9 0 9 9 0 4-4 4H32q2-8-1-13z"/></svg>32</span>Participants</button>
    <button class="chev" aria-label="Participant options"><svg width="16" height="10" viewBox="0 0 16 10"><path d="M2 8l6-6 6 6" fill="none" stroke="#b0b0b0" stroke-width="3" stroke-linecap="round" stroke-linejoin="round"/></svg></button>
    <button class="ctl chat"><svg width="40" height="36" viewBox="0 0 40 36"><path d="M6 0h28q6 0 6 6v16q0 6-6 6H18l-9 8v-8H6q-6 0-6-6V6q0-6 6-6z" fill="#a6a6a6"/></svg>Chat</button>
    <button class="ctl sharebtn"><svg width="48" height="36" viewBox="0 0 48 36"><rect width="48" height="36" rx="5" fill="#68d76b"/><path d="M24 27V11M18 16l6-6 6 6" fill="none" stroke="#1b1b1b" stroke-width="3" stroke-linecap="round"/></svg>Share Screen</button>
    <button class="ctl react"><svg width="46" height="44" viewBox="0 0 46 44"><circle cx="20" cy="25" r="18" fill="#a6a6a6"/><circle cx="36" cy="9" r="11" fill="#1b1b1b"/><path d="M36 2v14M29 9h14" stroke="#a6a6a6" stroke-width="3"/><circle cx="15" cy="22" r="2.500" fill="#1b1b1b"/><circle cx="25" cy="22" r="2.500" fill="#1b1b1b"/><path d="M13 28q7 8 14 0" fill="none" stroke="#1b1b1b" stroke-width="3" stroke-linecap="round"/></svg>Reactions</button>
  </div>
  <button class="leave">Leave</button>
</footer>
</body>
</html>
```
FILE: styles.css
```css
* { box-sizing: border-box; }
body {
  margin: 0;
  min-height: 100vh;
  display: flex;
  flex-direction: column;
  background: #111;
  color: #b0b0b0;
  font: 24px/1.2 Inter, "Liberation Sans", sans-serif;
}
h1, h2, h3, p, ol { margin: 0; padding: 0; font-weight: inherit; font-size: inherit; }
button { font: inherit; color: inherit; background: none; border: 0; padding: 0; }
svg { display: block; flex: none; }

/* Meeting stage */
.stage {
  flex: 1;
  padding-bottom: 2px;
  display: grid;
  grid-template-columns: 2850fr 16px 718fr;
  align-items: center;
}
.top {
  grid-area: 1 / 1 / 2 / 4;
  align-self: start;
  display: grid;
  grid-template-columns: 1fr auto 1fr;
  align-items: start;
}
.share { grid-area: 1 / 1; }
.handle { grid-area: 1 / 2; }
.tile { grid-area: 1 / 3; }
.shield {
  width: 56px;
  height: 56px;
  margin: 14px 26px;
  border-radius: 12px;
  background: #0a0a0a;
  display: grid;
  place-items: center;
}
.banner { display: flex; height: 44px; border-radius: 0 0 12px 12px; overflow: hidden; }
.banner-msg {
  width: 532px;
  background: #68d76b;
  color: #1d2b33;
  display: grid;
  place-items: center;
}
.banner-opt {
  width: 216px;
  padding: 0 10px 4px 0;
  background: #222326;
  color: #c4c4c4;
  font-size: 22px;
  display: flex;
  align-items: center;
  justify-content: center;
  gap: 10px;
}
.view-btn {
  justify-self: end;
  margin: 15px 20px;
  width: 120px;
  height: 54px;
  border-radius: 8px;
  background: #242424;
  color: #d6d6d6;
  display: flex;
  align-items: center;
  justify-content: center;
  gap: 10px;
}
.handle {
  justify-self: center;
  width: 10px;
  height: 52px;
  border: solid #d8d8d8;
  border-width: 0 3px;
}
.tile {
  aspect-ratio: 16 / 9;
  background: #242424;
  color: #fff;
  font-size: 64px;
  display: grid;
  place-items: center;
}

/* Shared Mac desktop */
.share {
  aspect-ratio: 2850 / 1782;
  min-width: 0;
  overflow: hidden;
  display: flex;
  flex-direction: column;
  gap: 2px;
  background: #3c4a86;
}
.menubar {
  height: 38px;
  padding: 0 28px 0 34px;
  display: flex;
  align-items: center;
  gap: 33px;
  background: linear-gradient(90deg, #865f8c, #7b689c 350px, #6b73ac 620px, #5b7fb6 1150px, #4f80b4 1600px, #3f6dab 2300px, #3d67a6);
  color: #f4f1f8;
  font-size: 20px;
  font-weight: 500;
  text-shadow: 0 1px 2px #0004;
}
.apple { margin-bottom: 3px; }
.menu.app { font-weight: 700; }
.status {
  margin-left: auto;
  display: flex;
  align-items: center;
  gap: 29px;
}
.clock { display: flex; gap: 14px; margin-left: -8px; font-size: 21px; }
.desktop {
  flex: 1;
  min-height: 0;
  display: flex;
}
.dock-col {
  flex: none;
  width: 122px;
  padding: 69px 12px 70px 8px;
  display: flex;
  background:
    linear-gradient(90deg, #0000 0, #0000 85px, #10001055 122px),
    linear-gradient(#cb5370, #c85a5e 140px, #b9474f 300px, #c03a52 480px, #a83560 620px, #5d3868 780px, #563a6c 1000px, #443c70 1250px, #2f3f70 1480px, #253b62);
}
.dock {
  flex: 1;
  padding: 4px 0;
  border-radius: 24px;
  border: 1px solid #ffffff38;
  display: flex;
  flex-direction: column;
  background: linear-gradient(#ea8c88, #ea8585 250px, #e6779a 450px, #e66c96 560px, #d570a2 680px, #b877b2 820px, #a878b2 1020px, #9a78b0 1180px, #8a7aae 1350px, #7880ae 1500px, #6f82a8);
}
.dock svg { flex: 1; min-height: 0; width: 100%; overflow: visible; }
.dock hr { width: 76px; height: 2px; margin: 18px 12px; border: 0; background: #50306a80; }
.cal-m { font: 700 12px Inter, sans-serif; fill: #fff; text-anchor: middle; }
.cal-d { font: 300 36px Inter, sans-serif; fill: #222; text-anchor: middle; }
.jb { font: 700 24px Inter, sans-serif; fill: #fff; }
.ij { font: 700 22px "DejaVu Sans Mono", monospace; }
.se1 { font: 400 20px Lato, sans-serif; fill: #fff; text-anchor: middle; }
.se2 { font: 400 26px Lato, sans-serif; fill: #fff; text-anchor: middle; }
.quote { font: 700 44px "Liberation Serif", serif; fill: #e8a94e; }

/* Keynote window */
.window {
  flex: 1;
  min-width: 0;
  display: flex;
  flex-direction: column;
  border-radius: 14px;
  overflow: hidden;
  background: #e3e1e4;
  color: #59575a;
}
.win-head { height: 112px; flex: none; display: flex; border-bottom: 2px solid #d3d1d4; }
.lights {
  width: 250px;
  padding: 12px 16px;
  display: flex;
  gap: 12px;
  background: #e3e1e4;
  border-right: 1px solid #d3d1d4;
}
.lights i { width: 20px; height: 20px; border-radius: 50%; }
.red { background: #e0695e; }
.yellow { background: #ebbb5c; }
.green { background: #79c261; }
.bar { flex: 1; background: #f2f0f3; }
.doc-title {
  height: 44px;
  display: flex;
  align-items: center;
  justify-content: center;
  gap: 10px;
  font-size: 21px;
  font-weight: 600;
  color: #48464a;
}
.tools {
  padding: 0 16px;
  display: grid;
  grid-template-columns: auto 341fr auto 342fr auto 332fr auto 323fr auto;
  font-size: 18px;
}
.group { display: flex; }
.left { grid-column: 1; gap: 20px; }
.play { grid-column: 3; }
.media { grid-column: 5; gap: 26px; }
.collab { grid-column: 7; }
.right { grid-column: 9; gap: 18px; }
.tool {
  height: 64px;
  display: grid;
  grid-template-rows: 36px 30px;
  place-items: center;
  line-height: 20px;
}
.pct {
  width: 86px;
  height: 36px;
  border: 1px solid #e6e4e7;
  border-radius: 6px;
  display: flex;
  align-items: center;
  justify-content: center;
  gap: 10px;
  font-weight: 500;
}
.hl {
  width: 100px;
  height: 34px;
  border-radius: 6px;
  background: #e5e3e6;
  display: grid;
  place-items: center;
}
.win-body { flex: 1; min-height: 0; display: flex; }

/* Slide navigator */
.nav {
  position: relative;
  flex: none;
  width: 250px;
  overflow: hidden;
  border-left: 3px solid #d0ced2;
}
.slides { list-style: none; margin: -79px 0 0 15px; width: 193px; }
.slides li {
  height: 97px;
  padding: 8px;
  display: flex;
  justify-content: flex-end;
  align-items: flex-end;
  gap: 8px;
  font-size: 18px;
  line-height: 14px;
  color: #7d7b7e;
}
.slides svg {
  width: 144px;
  height: 82px;
  border-radius: 6px;
  background: #fefefe;
  box-shadow: 0 1px 4px #0005;
}
.slides .on { background: #417be9; border-radius: 11px; color: #fff; font-weight: 600; }
.slides text { fill: #222; }
.slides .h { font: 800 13px Inter, sans-serif; text-anchor: middle; }
.slides .b { font: 600 11px Inter, sans-serif; }
.slides .c { font: 500 10px Inter, sans-serif; opacity: .8; }
.slides .m { font: 700 18px "Liberation Mono", monospace; text-anchor: middle; }
.scroll {
  position: absolute;
  top: 113px;
  right: 6px;
  width: 13px;
  height: 475px;
  border-radius: 7px;
  background: #b0aeb1;
}

/* Canvas */
.canvas {
  flex: 1;
  min-width: 0;
  background: #e7e5e8;
  display: flex;
  align-items: center;
}
.slide {
  position: relative;
  width: 100%;
  aspect-ratio: 2047 / 1151;
  padding: 102px 0 0 88px;
  background: #fefefe;
  box-shadow: 0 0 8px #0005;
  clip-path: inset(-10px 0);
  color: #0c0c0c;
}
.slide h2 {
  margin-left: 542px;
  font-size: 57px;
  font-weight: 600;
  line-height: 68px;
}
.slide .text {
  margin-top: 320px;
  font: 38px/71px "DejaVu Sans", sans-serif;
  white-space: nowrap;
}
.code {
  display: inline-block;
  margin-top: 96px;
  padding-right: 12px;
  background: #f6f4f8;
  font: 52px/56px "DejaVu Sans", sans-serif;
  white-space: nowrap;
}
.code b { font-weight: 400; }
.pu { color: #5a1a62; fill: #5a1a62; }
.ol { color: #75702f; }
.bl { color: #0a1a88; fill: #0a1a88; }
.gr { color: #4b8436; fill: #4b8436; }
.sq { text-decoration: underline dotted #d0526a99 3px; text-decoration-skip-ink: none; text-underline-offset: 1px; }
.cursor { position: absolute; left: 1464px; top: 945px; }

/* Inspector */
.inspector {
  flex: none;
  width: 432px;
  border-left: 2px solid #d3d1d4;
  background: #efedf0;
  color: #2e2c2f;
  font-size: 19px;
}
.ins-title {
  height: 44px;
  line-height: 44px;
  border-bottom: 2px solid #dcdadd;
  text-align: center;
  color: #8b898c;
}
.ins-body { padding: 17px 17px 0; }
.layout {
  width: 100%;
  height: 115px;
  padding: 0 18px 0 11px;
  border-radius: 6px;
  background: #fff;
  display: flex;
  align-items: center;
  gap: 9px;
  text-align: left;
}
.lay-thumb { box-shadow: 0 1px 3px #0008; }
.lay-thumb text { font: 800 6px Inter, sans-serif; text-anchor: middle; }
.lay-name { flex: 1; display: grid; line-height: 27px; color: #8b898c; }
.lay-name b { color: #1e1c1f; font-weight: 700; }
.sec { margin: 0 8px; border: 0; border-bottom: 2px solid #dcdadd; }
.appear {
  margin-top: 17px;
  border-top: 2px solid #dcdadd;
  padding: 24px 2px 18px;
  display: grid;
  gap: 16px;
}
.appear legend { float: left; padding: 0; font-weight: 600; line-height: 24px; }
.appear label { display: flex; align-items: center; gap: 11px; line-height: 24px; }
.appear input {
  appearance: none;
  width: 21px;
  height: 22px;
  margin: 0;
  border: 1px solid #d9d7da;
  border-radius: 5px;
  background: #fff;
}
.bg { height: 78px; display: flex; align-items: center; justify-content: space-between; padding-left: 4px; }
.disc { display: flex; align-items: center; gap: 12px; font-weight: 600; }
.well { width: 104px; height: 33px; border-radius: 7px; background: #fff; box-shadow: 0 1px 2px #0005; }
.edit { padding: 36px 30px; }
.edit button {
  width: 100%;
  height: 33px;
  border-radius: 7px;
  background: #fff;
  box-shadow: 0 1px 2px #0004;
  font-weight: 500;
}

/* Meeting controls */
.controls {
  height: 106px;
  padding: 0 26px 0 44px;
  background: #1b1b1b;
  display: grid;
  grid-template-columns: auto 1233fr auto 1192fr auto;
  align-items: start;
}
.cg { display: flex; }
.cg-left { grid-column: 1; }
.cg-mid { grid-column: 3; }
.ctl {
  padding-top: 10px;
  display: grid;
  grid-template-rows: 50px 40px;
  place-items: center;
  color: #a9a9a9;
}
.unmute { width: 94px; }
.video { width: 130px; margin-left: 28px; }
.people { width: 134px; }
.chat { width: 56px; }
.sharebtn { width: 156px; margin: 0 41px 0 68px; color: #68d76b; }
.react { width: 114px; }
.cnt { display: flex; align-items: center; gap: 8px; margin-left: 32px; width: 82px; font-size: 22px; }
.chev { align-self: start; margin: 31px 11px 0; }
.video + .chev { margin: 31px 0 0 -8px; }
.people + .chev { margin: 31px 70px 0 18px; }
.leave {
  grid-column: 5;
  align-self: center;
  width: 126px;
  height: 56px;
  border-radius: 14px;
  background: #b2322f;
  color: #fff;
  font-size: 26px;
  font-weight: 600;
}
```
